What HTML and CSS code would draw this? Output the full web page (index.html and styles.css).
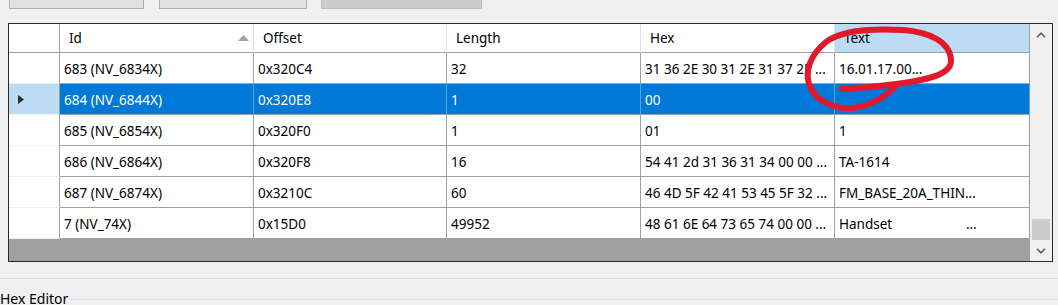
FILE: index.html
```html
<!DOCTYPE html>
<html>
<head>
<meta charset="utf-8">
<link rel="stylesheet" href="styles.css">
</head>
<body>
<div class="toolbar">
  <div class="btn b1"></div>
  <div class="btn b2"></div>
  <div class="btn b3 disabled"></div>
</div>

<div class="gridview">
  <div class="table">
    <div class="hc rh"></div>
    <div class="hc sorted"><span>Id</span><svg class="sort" width="11" height="6" viewBox="0 0 11 6"><path d="M0 6 L5.5 0 L11 6 Z" fill="#a0a0a0"/></svg></div>
    <div class="hc">Offset</div>
    <div class="hc">Length</div>
    <div class="hc">Hex</div>
    <div class="hc hot">Text</div>

    <div class="c rh"></div>
    <div class="c">683 (NV_6834X)</div>
    <div class="c">0x320C4</div>
    <div class="c">32</div>
    <div class="c">31 36 2E 30 31 2E 31 37 2E ...</div>
    <div class="c">16.01.17.00...</div>

    <div class="c rh sel-rh"><svg width="6" height="9" viewBox="0 0 6 9"><path d="M0 0 L6 4.5 L0 9 Z" fill="#2b2b2b"/></svg></div>
    <div class="c sel">684 (NV_6844X)</div>
    <div class="c sel">0x320E8</div>
    <div class="c sel">1</div>
    <div class="c sel">00</div>
    <div class="c sel"></div>

    <div class="c rh"></div>
    <div class="c">685 (NV_6854X)</div>
    <div class="c">0x320F0</div>
    <div class="c">1</div>
    <div class="c">01</div>
    <div class="c">1</div>

    <div class="c rh"></div>
    <div class="c">686 (NV_6864X)</div>
    <div class="c">0x320F8</div>
    <div class="c">16</div>
    <div class="c">54 41 2d 31 36 31 34 00 00 ...</div>
    <div class="c">TA-1614</div>

    <div class="c rh"></div>
    <div class="c">687 (NV_6874X)</div>
    <div class="c">0x3210C</div>
    <div class="c">60</div>
    <div class="c">46 4D 5F 42 41 53 45 5F 32 ...</div>
    <div class="c">FM_BASE_20A_THIN...</div>

    <div class="c rh"></div>
    <div class="c">7 (NV_74X)</div>
    <div class="c">0x15D0</div>
    <div class="c">49952</div>
    <div class="c">48 61 6E 64 73 65 74 00 00 ...</div>
    <div class="c pre">Handset                     ...</div>

    <div class="empty"></div>
  </div>
  <div class="vscroll">
    <svg class="arrow" width="10" height="6" viewBox="0 0 10 6"><path d="M1 5.2 L5 1.2 L9 5.2" fill="none" stroke="#606060" stroke-width="1.6"/></svg>
    <div class="track"><div class="thumb"></div></div>
    <svg class="arrow" width="10" height="6" viewBox="0 0 10 6"><path d="M1 0.8 L5 4.8 L9 0.8" fill="none" stroke="#606060" stroke-width="1.6"/></svg>
  </div>
</div>

<div class="sep"></div>
<div class="group">
  <span class="legend">Hex Editor</span>
  <div class="gline"></div>
</div>

<svg class="annot" width="170" height="100" viewBox="795 20 170 100">
  <path d="M842 89 C862 88 880 86 896 84 C926 80 952 75 951 60 C950 42 930 32 903 30 C868 28 840 31 826 42 C810 55 805 71 809 84 C815 102 835 109 852 108 C872 106 886 96 896 86" fill="none" stroke="#e3182b" stroke-width="6" stroke-linecap="round" stroke-linejoin="round"/>
</svg>
</body>
</html>
```

FILE: styles.css
```css
html, body {
  margin: 0;
  padding: 0;
  background: #f0f0f0;
  width: 1058px;
  height: 305px;
  overflow: hidden;
  font-family: "Noto Sans", "Open Sans", sans-serif;
  font-size: 13.5px;
  color: #000;
  position: relative;
}

.toolbar {
  display: flex;
  align-items: flex-end;
  height: 9px;
  overflow: hidden;
  padding-left: 9px;
}
.btn {
  height: 22px;
  box-sizing: border-box;
  background: #e1e1e1;
  border: 1px solid #adadad;
  flex: none;
}
.b1 { width: 135px; }
.b2 { width: 148px; margin-left: 15px; }
.b3 { width: 161px; margin-left: 14px; }
.btn.disabled { background: #cccccc; border-color: #bfbfbf; }

.gridview {
  margin: 14px 0 0 8px;
  width: 1045px;
  box-sizing: border-box;
  border: 1px solid #2a2a2a;
  display: flex;
  background: #f0f0f0;
}

.table {
  display: grid;
  grid-template-columns: 51px 194px 193px 194px 194px 195px;
  grid-template-rows: 29px repeat(6, 31px) 22px;
  width: 1021px;
  flex: none;
}

.hc {
  background: #fff;
  box-sizing: border-box;
  border-right: 1px solid #e3e3e3;
  border-bottom: 1px solid #a0a0a0;
  padding-left: 9px;
  display: flex;
  align-items: center;
  white-space: nowrap;
  overflow: hidden;
}
.hc.rh { border-right: 1px solid #a0a0a0; }
.hc.sorted { justify-content: space-between; padding-right: 4px; }
.hc.sorted .sort { margin-top: -1px; }
.hc.hot { background: #bcdcf4; border-right: 1px solid #a0a0a0; }

.c {
  background: #fff;
  box-sizing: border-box;
  border-right: 1px solid #a0a0a0;
  border-bottom: 1px solid #a0a0a0;
  padding-left: 4px;
  padding-top: 1px;
  display: flex;
  align-items: center;
  white-space: nowrap;
  overflow: hidden;
}
.c.pre { white-space: pre; }
.c.rh { border-bottom-color: #f0f0f0; padding-left: 9px; }
.c.sel-rh { background: #bcdcf4; }
.c.sel { background: #0078d7; color: #fff; border-bottom-color: #a0a0a0; border-right-color: #5a9fd8; }

.empty {
  grid-column: 1 / -1;
  background: #a0a0a0;
}

.vscroll {
  width: 22px;
  flex: none;
  display: flex;
  flex-direction: column;
  align-items: center;
  background: #f0f0f0;
}
.vscroll .arrow { margin: 8px 0 7px; flex: none; }
.vscroll .arrow:first-child { margin-top: 8px; }
.track {
  flex: 1;
  width: 100%;
  display: flex;
  flex-direction: column;
  justify-content: flex-end;
  align-items: center;
}
.thumb {
  width: 18px;
  height: 21px;
  background: #cdcdcd;
}

.sep {
  margin-top: 16px;
  border-top: 1px solid #dcdcdc;
}

.group {
  display: flex;
  align-items: center;
  margin-top: 11px;
  height: 18px;
}
.legend {
  font-size: 14px;
  color: #000;
  padding-right: 3px;
  line-height: 18px;
}
.gline {
  flex: 1;
  border-top: 1px solid #dcdcdc;
  margin-top: 1px;
}

.annot {
  position: absolute;
  left: 795px;
  top: 20px;
  pointer-events: none;
}
```
